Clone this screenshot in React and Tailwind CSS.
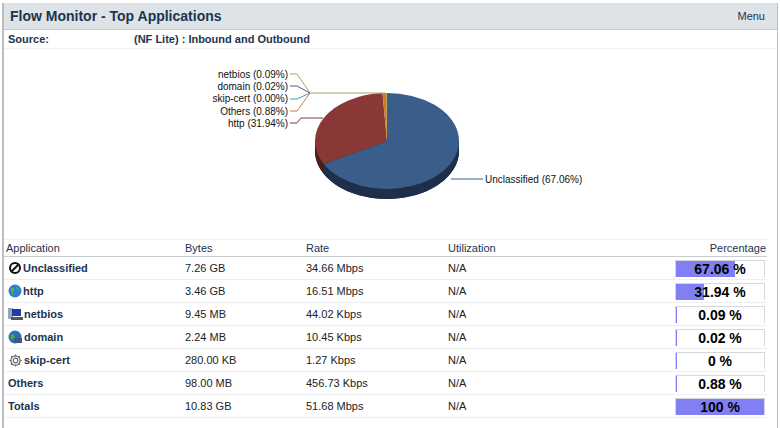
import React from "react";

const rows = [
  { name: "Unclassified", icon: "no", bytes: "7.26 GB", rate: "34.66 Mbps", pct: 67.06, label: "67.06 %" },
  { name: "http", icon: "globe", bytes: "3.46 GB", rate: "16.51 Mbps", pct: 31.94, label: "31.94 %" },
  { name: "netbios", icon: "pc", bytes: "9.45 MB", rate: "44.02 Kbps", pct: 0.09, label: "0.09 %" },
  { name: "domain", icon: "dom", bytes: "2.24 MB", rate: "10.45 Kbps", pct: 0.02, label: "0.02 %" },
  { name: "skip-cert", icon: "gear", bytes: "280.00 KB", rate: "1.27 Kbps", pct: 0, label: "0 %" },
  { name: "Others", icon: null, bytes: "98.00 MB", rate: "456.73 Kbps", pct: 0.88, label: "0.88 %" },
  { name: "Totals", icon: null, bytes: "10.83 GB", rate: "51.68 Mbps", pct: 100, label: "100 %", total: true },
];

function Icon({ t }) {
  if (t === "no")
    return (<svg width="14" height="14" viewBox="0 0 14 14"><circle cx="7" cy="7" r="5" fill="none" stroke="#111" strokeWidth="2"/><line x1="3" y1="11" x2="11" y2="3" stroke="#111" strokeWidth="2"/></svg>);
  if (t === "globe")
    return (<svg width="14" height="14" viewBox="0 0 14 14"><circle cx="7" cy="7" r="6.5" fill="#2a7fd0"/><path d="M3 4 Q6 3 6 6 Q4 8 5 11 Q3 9 3 4Z" fill="#5cb83c"/><path d="M8 3 Q11 4 11 7 Q9 6 8 3Z" fill="#5cb83c"/></svg>);
  if (t === "pc")
    return (<svg width="15" height="14" viewBox="0 0 15 14"><rect x="0" y="1" width="5" height="11" fill="#9aa4b8"/><rect x="4" y="2" width="9" height="7" fill="#1e3fa8"/><rect x="3" y="10" width="12" height="3" fill="#556"/></svg>);
  if (t === "dom")
    return (<svg width="15" height="14" viewBox="0 0 15 14"><circle cx="7" cy="7" r="6.5" fill="#2a6fb8"/><path d="M2 5 Q6 3 7 7 Q5 10 3 9Z" fill="#4fa83a"/><rect x="6" y="8" width="8" height="5" fill="#3b5a8a"/></svg>);
  if (t === "gear")
    return (<svg width="15" height="15" viewBox="0 0 16 16"><g fill="none" stroke="#666" strokeWidth="1.2"><circle cx="8" cy="8" r="2.5"/><path d="M8 1.5v2M8 12.5v2M1.5 8h2M12.5 8h2M3.4 3.4l1.4 1.4M11.2 11.2l1.4 1.4M3.4 12.6l1.4-1.4M11.2 4.8l1.4-1.4"/><circle cx="8" cy="8" r="5"/></g></svg>);
  return null;
}

function Pie() {
  const cx = 386, cy = 140, rx = 72, ry = 48, d = 10;
  const pt = (a, dy = 0) => [cx + rx * Math.cos(a), cy + dy + ry * Math.sin(a)];
  const deg = (x) => (x * Math.PI) / 180;
  const slices = [
    { v: 67.06, c: "#3a5d8a", s: "#1e2f4a" },
    { v: 31.94, c: "#8a3836", s: "#4a1c1b" },
    { v: 0.88, c: "#d07a20", s: "#7a4510" },
    { v: 0.12, c: "#8aa040", s: "#556020" },
  ];
  let a = -90;
  const paths = slices.map((s) => {
    const a0 = a, a1 = a + (s.v * 360) / 100;
    a = a1;
    const [x0, y0] = pt(deg(a0));
    const [x1, y1] = pt(deg(a1));
    const large = a1 - a0 > 180 ? 1 : 0;
    return { ...s, a0, a1, top: `M${cx},${cy} L${x0},${y0} A${rx},${ry} 0 ${large} 1 ${x1},${y1} Z` };
  });
  const sides = paths.map((p) => {
    const s0 = Math.max(p.a0, 0), s1 = Math.min(p.a1, 180);
    if (s1 <= s0) return null;
    const [x0, y0] = pt(deg(s0));
    const [x1, y1] = pt(deg(s1));
    const [x2, y2] = pt(deg(s1), d);
    const [x3, y3] = pt(deg(s0), d);
    return <path key={p.c} d={`M${x0},${y0} A${rx},${ry} 0 0 1 ${x1},${y1} L${x2},${y2} A${rx},${ry} 0 0 0 ${x3},${y3} Z`} fill={p.s} />;
  });
  const lbl = { fontFamily: "Liberation Sans, Arial, sans-serif", fontSize: 10, fill: "#111" };
  return (
    <svg width="776" height="190" viewBox="3 48 776 190" className="block">
      <path d={`M${cx - rx},${cy} L${cx - rx},${cy + d} A${rx},${ry} 0 0 0 ${cx + rx},${cy + d} L${cx + rx},${cy} Z`} fill="#1e2f4a" />
      {sides}
      {paths.map((p) => <path key={p.c + "t"} d={p.top} fill={p.c} />)}
      <g fill="none" strokeWidth="1">
        <polyline points="289,73 296,73 309,92 384,92" stroke="#9aaa70" />
        <polyline points="289,85 296,85 309,92" stroke="#5a5080" />
        <polyline points="289,98 296,98 309,92" stroke="#4aa0b8" />
        <polyline points="289,110 296,110 309,92" stroke="#d08040" />
        <polyline points="289,122 296,122 300,117 322,117" stroke="#8a3836" />
        <polyline points="450,178 482,178" stroke="#3a5d8a" />
      </g>
      <text x="287" y="77" textAnchor="end" style={lbl}>netbios (0.09%)</text>
      <text x="287" y="89" textAnchor="end" style={lbl}>domain (0.02%)</text>
      <text x="287" y="101" textAnchor="end" style={lbl}>skip-cert (0.00%)</text>
      <text x="287" y="114" textAnchor="end" style={lbl}>Others (0.88%)</text>
      <text x="287" y="126" textAnchor="end" style={lbl}>http (31.94%)</text>
      <text x="484" y="182" style={lbl}>Unclassified (67.06%)</text>
    </svg>
  );
}

export default function App() {
  return (
    <div className="w-[780px] h-[428px] bg-white" style={{ fontFamily: "Liberation Sans, Arial, sans-serif" }}>
      <div className="mx-[2px] mt-[3px] w-[776px] h-[425px] border-l-[2px] border-r border-[#b8bec4] flex flex-col">
        <div className="h-[27px] bg-[#dde3e7] border-b border-[#c4cbd0] flex items-center justify-between pl-[6px] pr-[12px]">
          <span className="text-[14px] font-bold text-[#1c3450]">Flow Monitor - Top Applications</span>
          <span className="text-[11px] text-[#1c3450]">Menu</span>
        </div>
        <div className="h-[19px] flex items-center border-b border-[#eef0f2] text-[11px] font-bold text-[#1c3450]">
          <span className="pl-[4px] w-[130px]">Source:</span>
          <span>(NF Lite) : Inbound and Outbound</span>
        </div>
        <Pie />
        <div className="text-[11px] text-[#1c3450] pr-[10px]">
          <div className="flex items-center h-[18px] border-b border-t border-t-[#eef0f2] border-b-[#c8cdd2]">
            <span className="pl-[2px] w-[181px]">Application</span>
            <span className="w-[121px]">Bytes</span>
            <span className="w-[142px]">Rate</span>
            <span className="flex-1">Utilization</span>
            <span className="pr-[1px]">Percentage</span>
          </div>
          {rows.map((r) => (
            <div key={r.name} className="flex items-center h-[23px] border-b border-[#eceef0]">
              <span className="w-[181px] flex items-center gap-[1px] font-bold pl-[4px]">
                {r.icon && <Icon t={r.icon} />}
                {r.name}
              </span>
              <span className="w-[121px] text-[#222]">{r.bytes}</span>
              <span className="w-[142px] text-[#222]">{r.rate}</span>
              <span className="flex-1 text-[#222]">N/A</span>
              <div className="relative w-[90px] h-[17px] border-t border-l border-r border-[#d4d8dc] mr-[2px]">
                <div className="absolute left-0 top-0 bottom-0 bg-[#8080f4] border-l border-[#8080f4]" style={{ width: `${r.pct}%` }} />
                <div className="relative text-center text-[14px] leading-[16px] font-bold text-black">{r.label}</div>
              </div>
            </div>
          ))}
        </div>
      </div>
    </div>
  );
}
